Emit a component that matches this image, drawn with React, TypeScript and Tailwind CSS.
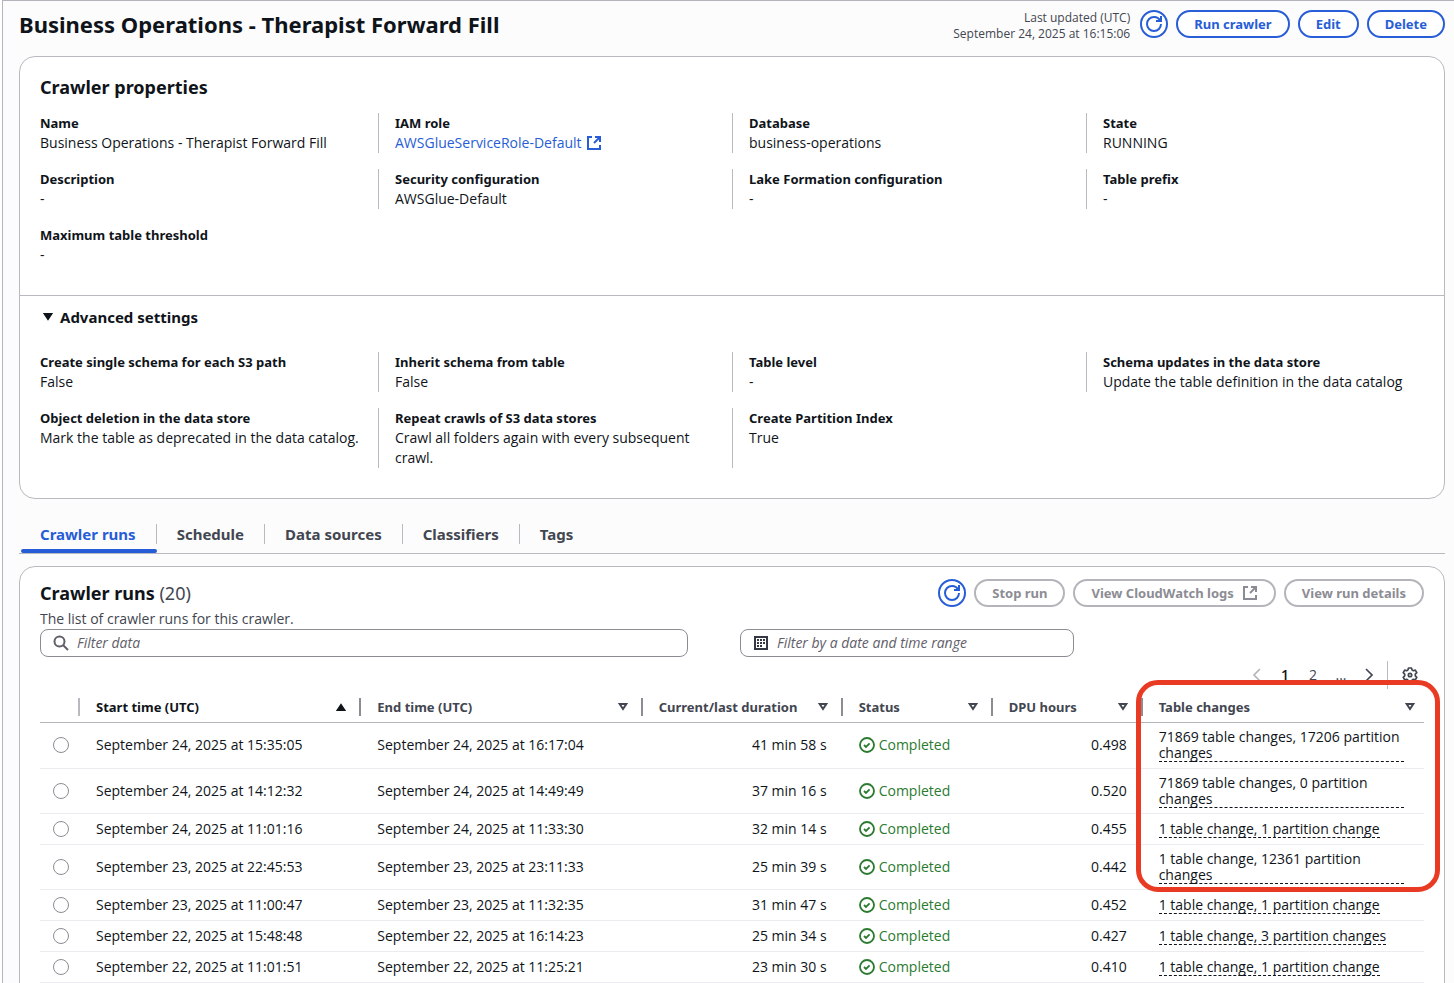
import type { ReactNode } from 'react';

type IconProps = { className?: string };

function RefreshIcon({ className = '' }: IconProps) {
  return (
    <svg viewBox="0 0 16 16" className={`size-4 ${className}`} fill="none" stroke="currentColor" strokeWidth="2" aria-hidden="true">
      <path d="M10 5h5V0" />
      <path d="M15 8a6.957 6.957 0 0 1-7 7 6.957 6.957 0 0 1-7-7 6.957 6.957 0 0 1 7-7 6.87 6.87 0 0 1 6.3 4" />
    </svg>
  );
}

function ExternalIcon({ className = '' }: IconProps) {
  return (
    <svg viewBox="0 0 16 16" className={`size-4 ${className}`} fill="none" stroke="currentColor" strokeWidth="2" aria-hidden="true">
      <path d="M6 2H2v12h12v-4" />
      <path d="M9 2h5v5" />
      <path d="M14 2 8 8" />
    </svg>
  );
}

function CaretDown({ filled = false, className = '' }: IconProps & { filled?: boolean }) {
  return (
    <svg viewBox="0 0 16 16" className={`size-4 shrink-0 ${className}`} fill={filled ? 'currentColor' : 'none'} stroke="currentColor" strokeWidth="2" aria-hidden="true">
      <path d="M4.7 5h6.6L8 10z" />
    </svg>
  );
}

function CaretUp() {
  return (
    <svg viewBox="0 0 16 16" className="size-4 shrink-0" fill="currentColor" stroke="currentColor" strokeWidth="2" aria-hidden="true">
      <path d="M4.7 11h6.6L8 6z" />
    </svg>
  );
}

function SearchIcon() {
  return (
    <svg viewBox="0 0 16 16" className="size-4 shrink-0 text-[#5f6069]" fill="none" stroke="currentColor" strokeWidth="2" aria-hidden="true">
      <circle cx="6.5" cy="6.5" r="5" />
      <path d="m10 10 5 5" />
    </svg>
  );
}

function CalendarIcon() {
  return (
    <svg viewBox="0 0 16 16" className="size-4 shrink-0 text-[#333843]" fill="none" stroke="currentColor" strokeWidth="2" aria-hidden="true">
      <path d="M2 2h12v12H2z" />
      <path d="M4 5h8M4 8h8M4 11h5" strokeDasharray="2 1" />
    </svg>
  );
}

function CheckIcon() {
  return (
    <svg viewBox="0 0 16 16" className="size-4 shrink-0" fill="none" stroke="currentColor" strokeWidth="1.8" aria-hidden="true">
      <circle cx="8" cy="8" r="7" />
      <path d="m5 8 2 2 3.6-3.6" />
    </svg>
  );
}

function GearIcon() {
  return (
    <svg viewBox="0 0 16 16" className="size-4" fill="none" stroke="currentColor" strokeWidth="1.7" strokeLinejoin="round" aria-hidden="true">
      <path d="M6 2.9 6.5 1h3l.5 1.9 1.3.8 2-.6 1.5 2.6L13.3 7.2v1.6l1.5 1.5-1.5 2.6-2-.6-1.3.8L9.5 15h-3L6 13.1l-1.3-.8-2 .6-1.5-2.6 1.5-1.5V7.2L1.2 5.7l1.5-2.6 2 .6z" />
      <circle cx="8" cy="8" r="1.7" />
    </svg>
  );
}

function Chevron({ left = false }: { left?: boolean }) {
  return (
    <svg viewBox="0 0 16 16" className="size-4" fill="none" stroke="currentColor" strokeWidth="1.7" aria-hidden="true">
      <path d={left ? 'M11 2 5 8l6 6' : 'm5 2 6 6-6 6'} />
    </svg>
  );
}

function PillButton({ children, disabled = false }: { children: ReactNode; disabled?: boolean }) {
  return (
    <button
      type="button"
      disabled={disabled}
      className={`flex h-7 items-center gap-2 rounded-full border-2 bg-white px-4 font-['Noto_Sans',sans-serif] text-[13px] leading-5 font-bold whitespace-nowrap ${
        disabled ? 'border-[#b4b4bb] text-[#8c8c94]' : 'border-[#275dd6] text-[#275dd6]'
      }`}
    >
      {children}
    </button>
  );
}

function RefreshButton({ label }: { label: string }) {
  return (
    <button type="button" aria-label={label} className="flex size-7 shrink-0 items-center justify-center rounded-full border-2 border-[#275dd6] bg-white text-[#275dd6]">
      <RefreshIcon />
    </button>
  );
}

type FieldData = { label: string; value: ReactNode };

function FieldGrid({ fields }: { fields: FieldData[] }) {
  return (
    <dl className="-mx-4 grid grid-cols-4 gap-y-4 text-sm leading-5">
      {fields.map((f, i) => (
        <div key={f.label} className={`px-4 ${i % 4 ? 'border-l border-[#b9b9c0]' : ''}`}>
          <dt className="font-['Noto_Sans',sans-serif] text-[13px] leading-5 font-bold">{f.label}</dt>
          <dd>{f.value}</dd>
        </div>
      ))}
    </dl>
  );
}

const properties: FieldData[] = [
  { label: 'Name', value: 'Business Operations - Therapist Forward Fill' },
  {
    label: 'IAM role',
    value: (
      <a href="#iam-role" className="inline-flex items-center gap-1 text-[#275dd6]">
        AWSGlueServiceRole-Default
        <ExternalIcon />
      </a>
    ),
  },
  { label: 'Database', value: 'business-operations' },
  { label: 'State', value: 'RUNNING' },
  { label: 'Description', value: '-' },
  { label: 'Security configuration', value: 'AWSGlue-Default' },
  { label: 'Lake Formation configuration', value: '-' },
  { label: 'Table prefix', value: '-' },
  { label: 'Maximum table threshold', value: '-' },
];

const advanced: FieldData[] = [
  { label: 'Create single schema for each S3 path', value: 'False' },
  { label: 'Inherit schema from table', value: 'False' },
  { label: 'Table level', value: '-' },
  { label: 'Schema updates in the data store', value: 'Update the table definition in the data catalog' },
  { label: 'Object deletion in the data store', value: 'Mark the table as deprecated in the data catalog.' },
  { label: 'Repeat crawls of S3 data stores', value: 'Crawl all folders again with every subsequent crawl.' },
  { label: 'Create Partition Index', value: 'True' },
];

const tabs = ['Crawler runs', 'Schedule', 'Data sources', 'Classifiers', 'Tags'];

const columns = [
  { title: 'Start time (UTC)', width: '' },
  { title: 'End time (UTC)', width: '' },
  { title: 'Current/last duration', width: 'w-[200px]' },
  { title: 'Status', width: 'w-[150px]' },
  { title: 'DPU hours', width: 'w-[150px]' },
  { title: 'Table changes', width: '' },
];

const runs = [
  ['September 24, 2025 at 15:35:05', 'September 24, 2025 at 16:17:04', '41 min 58 s', '0.498', '71869 table changes, 17206 partition changes'],
  ['September 24, 2025 at 14:12:32', 'September 24, 2025 at 14:49:49', '37 min 16 s', '0.520', '71869 table changes, 0 partition changes'],
  ['September 24, 2025 at 11:01:16', 'September 24, 2025 at 11:33:30', '32 min 14 s', '0.455', '1 table change, 1 partition change'],
  ['September 23, 2025 at 22:45:53', 'September 23, 2025 at 23:11:33', '25 min 39 s', '0.442', '1 table change, 12361 partition changes'],
  ['September 23, 2025 at 11:00:47', 'September 23, 2025 at 11:32:35', '31 min 47 s', '0.452', '1 table change, 1 partition change'],
  ['September 22, 2025 at 15:48:48', 'September 22, 2025 at 16:14:23', '25 min 34 s', '0.427', '1 table change, 3 partition changes'],
  ['September 22, 2025 at 11:01:51', 'September 22, 2025 at 11:25:21', '23 min 30 s', '0.410', '1 table change, 1 partition change'],
];

function RunsTable() {
  return (
    <div className="relative mt-1">
      <table className="w-full table-fixed border-collapse text-sm">
        <thead>
          <tr className="h-[29px] border-b border-[#b4b4bb] font-['Noto_Sans',sans-serif] text-[13px] text-[#424650]">
            <th scope="col" className="w-10 p-0">
              <span className="ml-auto block h-[18px] w-[2px] bg-[#b9b9c0]" />
            </th>
            {columns.map((c, i) => (
              <th key={c.title} scope="col" aria-sort={i === 0 ? 'ascending' : undefined} className={`p-0 text-left font-bold ${c.width} ${i === 0 ? 'text-[#0f141a]' : ''}`}>
                <div className="flex h-[18px] items-center">
                  <button type="button" className={`flex min-w-0 flex-1 items-center justify-between pl-4 whitespace-nowrap ${i < columns.length - 1 ? 'pr-[10px]' : 'pr-1'}`}>
                    {c.title}
                    {i === 0 ? <CaretUp /> : <CaretDown />}
                  </button>
                  <span className={`h-[18px] w-[2px] ${i < columns.length - 1 ? 'bg-[#8c8c94]' : ''}`} />
                </div>
              </th>
            ))}
          </tr>
        </thead>
        <tbody>
          {runs.map(([start, end, duration, dpu, changes]) => (
            <tr key={start} className="h-[31px] border-b border-[#ebebf0] first:h-[46px]">
              <td className="p-0 pl-[2px]">
                <input type="radio" name="run" aria-label={`Select run started ${start}`} className="mx-auto block size-4 appearance-none rounded-full border border-[#8c8c94] bg-white" />
              </td>
              <td className="py-0 pr-4 pl-4 whitespace-nowrap">{start}</td>
              <td className="py-0 pr-4 pl-4 whitespace-nowrap">{end}</td>
              <td className="py-0 pr-4 pl-4 text-right whitespace-nowrap">{duration}</td>
              <td className="py-0 pr-4 pl-4 text-[#2b7a2f]">
                <span className="flex items-center gap-1">
                  <CheckIcon />
                  Completed
                </span>
              </td>
              <td className="py-0 pr-4 pl-4 text-right">{dpu}</td>
              <td className="pt-[6px] pr-5 pb-[5px] pl-4">
                <button type="button" className="block border-b border-dashed border-[#0f141a] text-left leading-4">
                  {changes}
                </button>
              </td>
            </tr>
          ))}
        </tbody>
      </table>
      <div className="pointer-events-none absolute -top-[13px] -right-4 h-[212px] w-[304px] rounded-[22px] border-5 border-[#e93a24]" />
    </div>
  );
}

export default function App() {
  return (
    <main className="ml-[2px] h-screen overflow-hidden border-t border-l border-[#b4b4bb] bg-[#fcfcfd] pr-[9px] pl-4 font-['Open_Sans',sans-serif] text-[#0f141a]">
      <header className="flex h-[55px] items-start justify-between pt-[9px]">
        <h1 className="font-['Noto_Sans',sans-serif] text-[22px] leading-7 font-bold whitespace-nowrap">Business Operations - Therapist Forward Fill</h1>
        <div className="flex items-start gap-2">
          <p className="mr-[2px] text-right text-xs leading-4 text-[#424650]">
            Last updated (UTC)
            <br />
            September 24, 2025 at 16:15:06
          </p>
          <RefreshButton label="Refresh crawler" />
          <PillButton>Run crawler</PillButton>
          <PillButton>Edit</PillButton>
          <PillButton>Delete</PillButton>
        </div>
      </header>

      <section className="rounded-2xl border border-[#b9b9c0] bg-white">
        <div className="px-5 pt-[18px] pb-[30px]">
          <h2 className="mb-[14px] font-['Noto_Sans',sans-serif] text-[18px] leading-6 font-bold">Crawler properties</h2>
          <FieldGrid fields={properties} />
        </div>
        <div className="border-t border-[#b9b9c0] px-5 pt-[11px] pb-[30px]">
          <h3>
            <button type="button" aria-expanded="true" className="mb-[25px] flex items-center gap-1 font-['Noto_Sans',sans-serif] text-[15px] leading-5 font-bold">
              <CaretDown filled />
              Advanced settings
            </button>
          </h3>
          <FieldGrid fields={advanced} />
        </div>
      </section>

      <div role="tablist" className="mt-[14px] flex border-b border-[#b9b9c0] font-['Noto_Sans',sans-serif] text-[15px] font-bold text-[#424650]">
        {tabs.map((t, i) => (
          <button
            key={t}
            type="button"
            role="tab"
            aria-selected={i === 0}
            className={`flex h-10 flex-col justify-end ${i === 0 ? 'pl-[2px] text-[#275dd6]' : ''}`}
          >
            <span className={`block h-5 leading-5 ${i === 0 ? 'pr-5 pl-[19px]' : 'px-5'} ${i < tabs.length - 1 ? 'border-r border-[#b9b9c0]' : ''}`}>{t}</span>
            <span className={`mt-[5px] block h-1 w-full rounded-full ${i === 0 ? 'bg-[#275dd6]' : ''}`} />
          </button>
        ))}
      </div>

      <section className="mt-3 rounded-2xl border border-[#b9b9c0] bg-white px-5 pt-3 pb-5">
        <div className="flex items-start justify-between">
          <div>
            <h2 className="font-['Noto_Sans',sans-serif] text-[18px] leading-7 font-bold">
              Crawler runs <span className="font-normal text-[#424650]">(20)</span>
            </h2>
            <p className="mt-[2px] text-sm leading-5 text-[#424650]">The list of crawler runs for this crawler.</p>
          </div>
          <div className="flex gap-2">
            <RefreshButton label="Refresh runs" />
            <PillButton disabled>Stop run</PillButton>
            <PillButton disabled>
              View CloudWatch logs
              <ExternalIcon />
            </PillButton>
            <PillButton disabled>View run details</PillButton>
          </div>
        </div>
        <div className="grid grid-cols-[648fr_334fr_298fr] gap-x-[52px] text-sm text-[#5f6069] italic">
          <label className="flex h-7 items-center gap-2 rounded-lg border border-[#8c8c94] bg-white px-3">
            <SearchIcon />
            <input type="text" aria-label="Filter data" placeholder="Filter data" className="min-w-0 flex-1 outline-none placeholder:text-[#5f6069]" />
          </label>
          <button type="button" className="flex h-7 items-center gap-2 rounded-lg border border-[#8c8c94] bg-white px-3">
            <CalendarIcon />
            Filter by a date and time range
          </button>
        </div>
        <div className="mt-1 flex h-7 items-center justify-end text-sm text-[#424650]">
          <nav aria-label="Pagination" className="mr-1 flex items-center">
            <button type="button" disabled aria-label="Previous page" className="flex w-7 justify-center text-[#b4b4bb]">
              <Chevron left />
            </button>
            <button type="button" className="w-7 font-semibold text-[#0f141a]">1</button>
            <button type="button" className="w-7">2</button>
            <span className="w-7 text-center">...</span>
            <button type="button" aria-label="Next page" className="flex w-7 justify-center">
              <Chevron />
            </button>
          </nav>
          <span className="mr-2 h-7 w-px bg-[#b9b9c0]" />
          <button type="button" aria-label="Preferences" className="flex w-7 justify-center">
            <GearIcon />
          </button>
        </div>
        <RunsTable />
      </section>
    </main>
  );
}
